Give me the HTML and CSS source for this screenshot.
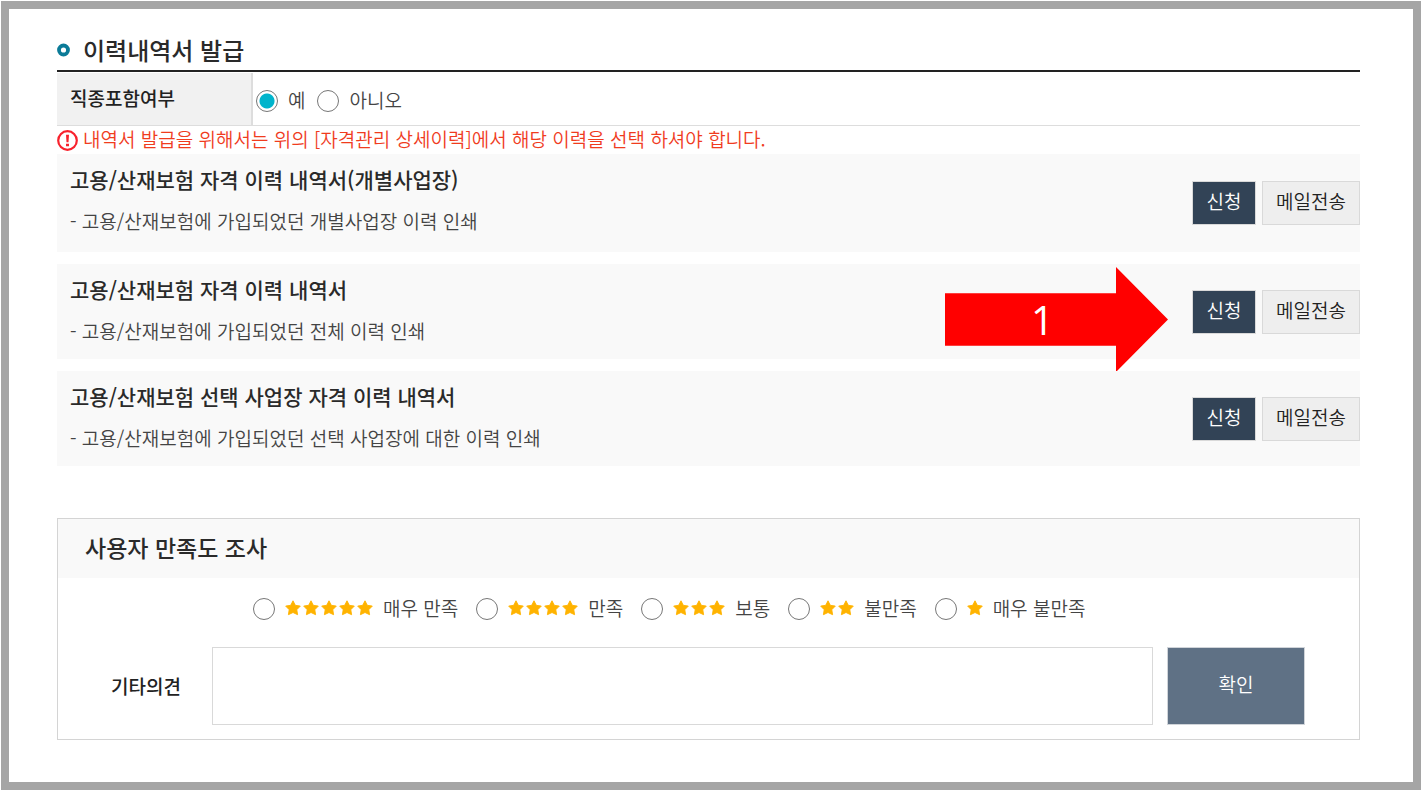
FILE: index.html
```html
<!DOCTYPE html>
<html lang="ko">
<head>
<meta charset="utf-8">
<title>이력내역서 발급</title>
<link rel="stylesheet" href="styles.css">
</head>
<body>
<svg class="defs" aria-hidden="true">
  <symbol id="star" viewBox="0 0 16 16"><path d="M8 .8l2.3 4.5 5 .8-3.5 3.6.8 5L8 12.5l-4.6 2.2.8-5L.7 6.1l5-.8z" fill="#ffb300" stroke="#ffb300" stroke-width=".9" stroke-linejoin="round"/></symbol>
</svg>
<main class="frame">
  <h1 class="page-title">
    <svg class="bullet" viewBox="0 0 14 14" aria-hidden="true"><circle cx="6.500" cy="7" r="4.500" fill="#fff" stroke="#0b7b98" stroke-width="3.800"/></svg>
    이력내역서 발급
  </h1>

  <div class="option-row" role="radiogroup" aria-labelledby="job-name">
    <div class="option-name" id="job-name">직종포함여부</div>
    <div class="option-values">
      <label class="choice"><input class="radio" type="radio" name="job" checked>예</label>
      <label class="choice"><input class="radio" type="radio" name="job">아니오</label>
    </div>
  </div>

  <p class="notice">
    <svg class="notice-icon" viewBox="0 0 21 21" aria-hidden="true"><circle cx="10.500" cy="10.500" r="9.300" fill="#fff" stroke="#f8222d" stroke-width="2.200"/><path d="M9 4.700h3l-.5 7.600h-2zM9 13.700h3v2.500H9z" fill="#f8222d"/></svg>
    내역서 발급을 위해서는 위의 [자격관리 상세이력]에서 해당 이력을 선택 하셔야 합니다.
  </p>

  <section class="docs">
    <article class="doc">
      <div class="doc-text">
        <h2 class="doc-title">고용/산재보험 자격 이력 내역서(개별사업장)</h2>
        <p class="doc-desc">- 고용/산재보험에 가입되었던 개별사업장 이력 인쇄</p>
      </div>
      <div class="doc-actions">
        <button class="btn btn-dark" type="button">신청</button>
        <button class="btn" type="button">메일전송</button>
      </div>
    </article>
    <article class="doc">
      <div class="doc-text">
        <h2 class="doc-title">고용/산재보험 자격 이력 내역서</h2>
        <p class="doc-desc">- 고용/산재보험에 가입되었던 전체 이력 인쇄</p>
      </div>
      <div class="doc-actions">
        <button class="btn btn-dark" type="button">신청</button>
        <button class="btn" type="button">메일전송</button>
      </div>
      <div class="arrow">1</div>
    </article>
    <article class="doc">
      <div class="doc-text">
        <h2 class="doc-title">고용/산재보험 선택 사업장 자격 이력 내역서</h2>
        <p class="doc-desc">- 고용/산재보험에 가입되었던 선택 사업장에 대한 이력 인쇄</p>
      </div>
      <div class="doc-actions">
        <button class="btn btn-dark" type="button">신청</button>
        <button class="btn" type="button">메일전송</button>
      </div>
    </article>
  </section>

  <form class="survey">
    <h2 class="survey-title">사용자 만족도 조사</h2>
    <div class="ratings">
      <label class="rating"><input class="radio" type="radio" name="score"><span class="stars"><svg><use href="#star"/></svg><svg><use href="#star"/></svg><svg><use href="#star"/></svg><svg><use href="#star"/></svg><svg><use href="#star"/></svg></span>매우 만족</label>
      <label class="rating"><input class="radio" type="radio" name="score"><span class="stars"><svg><use href="#star"/></svg><svg><use href="#star"/></svg><svg><use href="#star"/></svg><svg><use href="#star"/></svg></span>만족</label>
      <label class="rating"><input class="radio" type="radio" name="score"><span class="stars"><svg><use href="#star"/></svg><svg><use href="#star"/></svg><svg><use href="#star"/></svg></span>보통</label>
      <label class="rating"><input class="radio" type="radio" name="score"><span class="stars"><svg><use href="#star"/></svg><svg><use href="#star"/></svg></span>불만족</label>
      <label class="rating"><input class="radio" type="radio" name="score"><span class="stars"><svg><use href="#star"/></svg></span>매우 불만족</label>
    </div>
    <div class="comment">
      <label class="comment-label" for="comment">기타의견</label>
      <textarea class="comment-box" id="comment"></textarea>
      <button class="confirm" type="button">확인</button>
    </div>
  </form>
</main>
</body>
</html>
```

FILE: styles.css
```css
* {
  box-sizing: border-box;
}

body {
  margin: 0;
  padding: 1px;
  background: #fff;
  color: #444;
  font: 350 19px/28px "Noto Sans CJK KR", sans-serif;
}

h1,
h2,
p {
  margin: 0;
}

button,
textarea {
  font: inherit;
}

.defs {
  position: absolute;
  width: 0;
  height: 0;
}

.frame {
  min-height: calc(100vh - 2px);
  padding: 21px 53px 41px 48px;
  border: 8px solid #a5a5a5;
}

.page-title {
  display: flex;
  align-items: center;
  gap: 12px;
  height: 42px;
  border-bottom: 2px solid #222;
  color: #2a2a2a;
  font-size: 24px;
  font-weight: 500;
}

.bullet {
  width: 14px;
  height: 14px;
}

.option-row {
  display: flex;
  margin-top: 1px;
  border-bottom: 1px solid #ddd;
}

.option-name {
  width: 196px;
  padding: 11px 13px 13px;
  border-right: 2px solid #ddd;
  background: #f1f1f1;
  color: #222;
  font-weight: 500;
}

.option-values {
  display: flex;
  align-items: center;
  gap: 12px;
  padding: 2px 0 0 3px;
}

.choice,
.rating {
  display: flex;
  align-items: center;
  gap: 10px;
}

.radio {
  flex: none;
  width: 22px;
  height: 22px;
  margin: 2px 0 0;
  border: 1px solid #777;
  border-radius: 50%;
  background: #fff;
  appearance: none;
}

.radio:checked {
  background: radial-gradient(circle, #00b4cc 7px, #fff 8px);
}

.notice {
  display: flex;
  align-items: center;
  gap: 5px;
  padding-bottom: 3px;
  color: #f03c1e;
  line-height: 25px;
}

.notice-icon {
  width: 21px;
  height: 21px;
  margin-top: 4px;
}

.docs {
  display: grid;
  gap: 12px;
}

.doc {
  position: relative;
  display: flex;
  align-items: center;
  justify-content: space-between;
  background: #f9f9f9;
}

.doc-text {
  display: grid;
  gap: 14px;
  padding: 11px 13px 14px;
}

.doc:first-child .doc-text {
  padding-bottom: 17px;
}

.doc-title {
  color: #2a2a2a;
  font-size: 21px;
  font-weight: 500;
  line-height: 28px;
}

.doc-actions {
  display: flex;
  gap: 6px;
}

.btn {
  height: 44px;
  padding: 0 13px 4px;
  border: 1px solid #d9d9d9;
  background: #eee;
  color: #222;
}

.btn-dark {
  width: 64px;
  background: #324356;
  color: #fff;
}

.arrow {
  position: absolute;
  top: 3px;
  right: 192px;
  display: grid;
  place-items: center;
  width: 223px;
  height: 105px;
  padding-right: 28px;
  background: #f00;
  clip-path: polygon(0 25%, 171px 25%, 171px 0, 100% 50%, 171px 100%, 171px 75%, 0 75%);
  color: #fff;
  font: 400 40px/40px "Open Sans", sans-serif;
}

.survey {
  margin-top: 52px;
  border: 1px solid #d4d4d4;
}

.survey-title {
  padding: 14px 27px 17px;
  background: #f9f9f9;
  color: #2a2a2a;
  font-size: 23px;
  font-weight: 500;
  line-height: 28px;
}

.ratings {
  display: flex;
  gap: 18px;
  padding: 16px 195px 25px;
  white-space: nowrap;
}

.stars {
  display: flex;
  gap: 2px;
}

.stars svg {
  width: 16px;
  height: 16px;
}

.comment {
  display: flex;
  align-items: center;
  gap: 14px;
  padding: 0 54px 14px 53px;
}

.comment-label {
  width: 87px;
  color: #222;
  font-weight: 500;
}

.comment-box {
  flex: 1;
  min-width: 0;
  height: 78px;
  border: 1px solid #d9d9d9;
  resize: none;
}

.confirm {
  width: 138px;
  height: 78px;
  padding: 0 0 4px;
  border: 1px solid #d0d4d9;
  background: #5f7185;
  color: #fff;
}
```
